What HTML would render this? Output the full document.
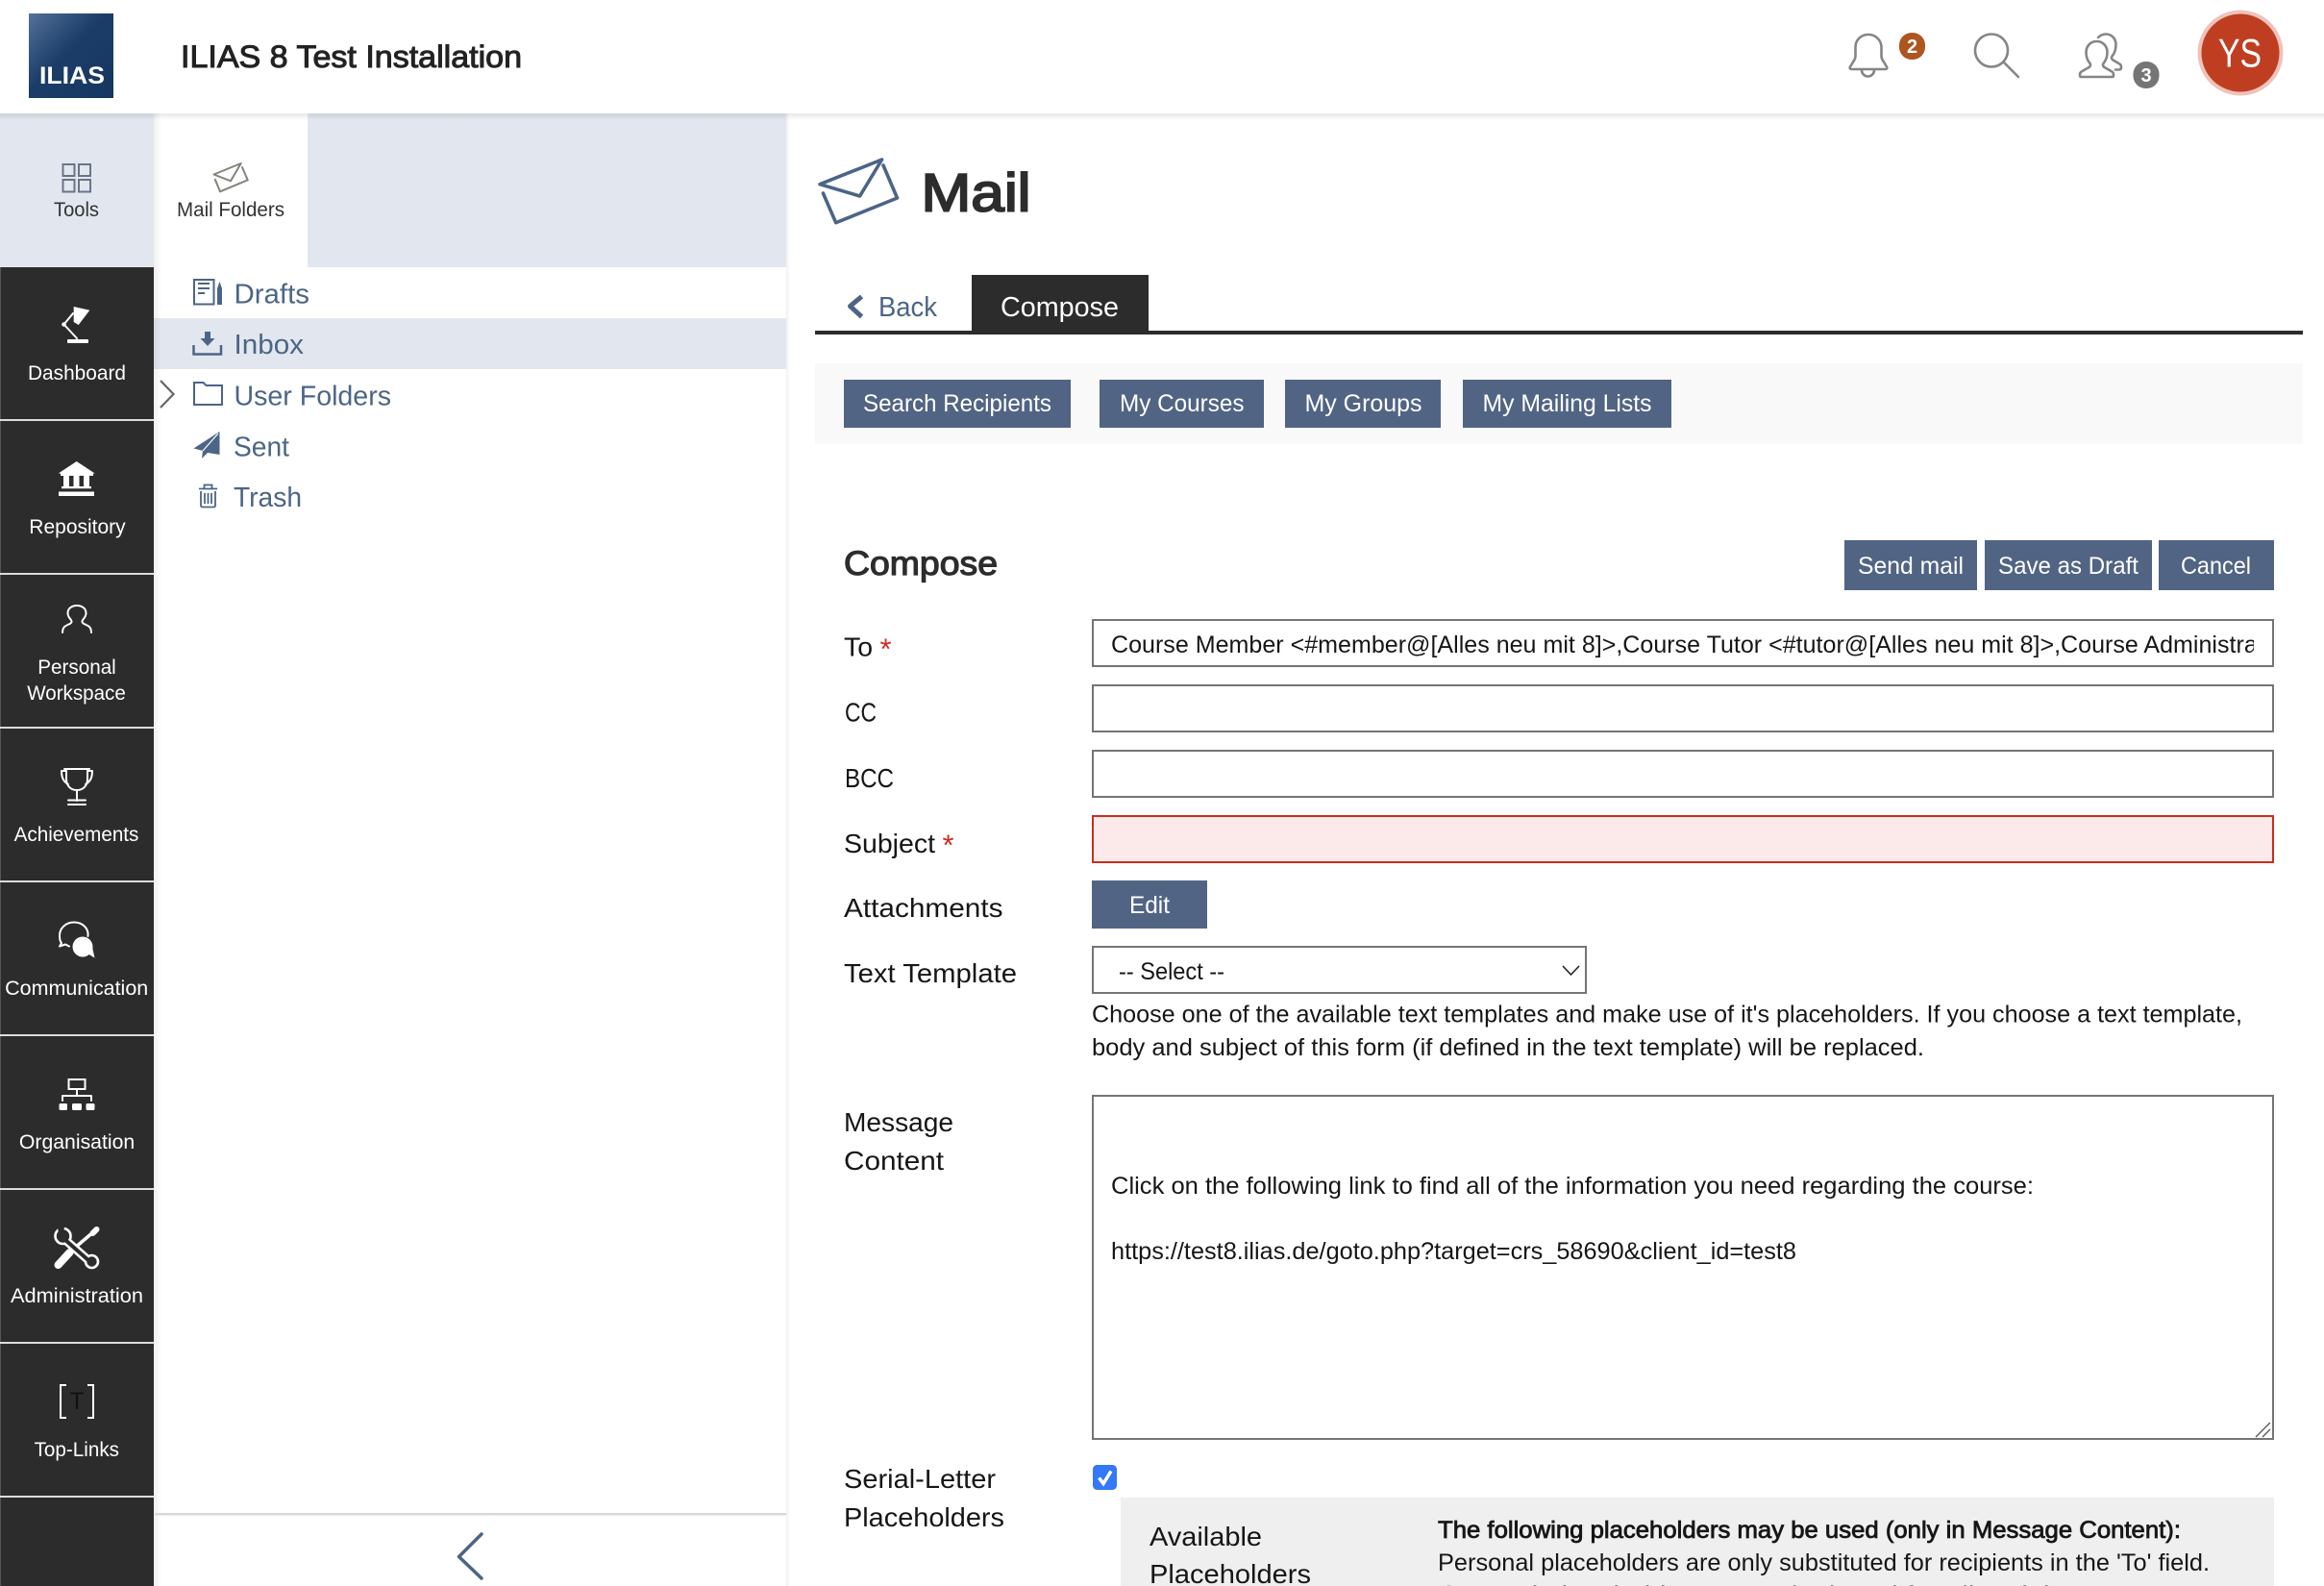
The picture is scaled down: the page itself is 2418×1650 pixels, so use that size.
<!DOCTYPE html>
<html lang="en">
<head>
<meta charset="utf-8">
<title>ILIAS 8 Test Installation - Mail</title>
<style>
html,body{margin:0;padding:0;background:#fff;width:2418px;height:1650px;overflow:hidden}
svg{display:block;position:absolute;left:0;top:0}
text{font-family:"Liberation Sans",Arial,sans-serif;white-space:pre}
.tile{fill:#fff;font-size:21px}
.tree{fill:#4c6586;font-size:29px}
.btn{fill:#fff;font-size:25px}
.lab{fill:#161616;font-size:28px}
.body{fill:#161616;font-size:25px}
.blue{fill:#516484}
.ico{fill:none;stroke:#fff;stroke-width:2;stroke-linecap:round;stroke-linejoin:round}
.hdr{fill:none;stroke:#858585;stroke-width:2.6;stroke-linecap:round;stroke-linejoin:round}
</style>
</head>
<body>
<svg width="2418" height="1650" viewBox="0 0 2418 1650" xmlns="http://www.w3.org/2000/svg">
<defs>
<linearGradient id="logo" x1="0" y1="0" x2="1" y2="1"><stop offset="0" stop-color="#54719a"/><stop offset=".45" stop-color="#1b3d68"/><stop offset="1" stop-color="#153660"/></linearGradient>
<linearGradient id="sh" x1="0" y1="0" x2="1" y2="0"><stop offset="0" stop-color="#000" stop-opacity=".06"/><stop offset="1" stop-color="#000" stop-opacity="0"/></linearGradient>
<linearGradient id="shd" x1="0" y1="0" x2="0" y2="1"><stop offset="0" stop-color="#000" stop-opacity=".09"/><stop offset="1" stop-color="#000" stop-opacity="0"/></linearGradient>
<clipPath id="toclip"><rect x="1140" y="646" width="1205" height="46"/></clipPath>
</defs>

<!-- Slate top row -->
<rect x="0" y="118" width="160" height="160" fill="#e2e7ef"/>
<rect x="320" y="118" width="498" height="160" fill="#e2e7ef"/>
<rect x="160" y="331" width="658" height="53" fill="#e2e7ef"/>

<!-- Dark main bar -->
<rect x="0" y="278" width="160" height="1372" fill="#2c2c2c"/>
<rect x="0" y="278" width="1" height="1372" fill="#555"/>
<g fill="#dcdcdc">
<rect x="0" y="436" width="160" height="2"/><rect x="0" y="596" width="160" height="2"/>
<rect x="0" y="756" width="160" height="2"/><rect x="0" y="916" width="160" height="2"/>
<rect x="0" y="1076" width="160" height="2"/><rect x="0" y="1236" width="160" height="2"/>
<rect x="0" y="1396" width="160" height="2"/><rect x="0" y="1556" width="160" height="2"/>
</g>
<rect x="160" y="118" width="8" height="1532" fill="url(#sh)"/>
<rect x="818" y="118" width="4" height="1532" fill="url(#sh)"/>
<rect x="161" y="1574" width="657" height="2.5" fill="#d8d8d8"/>

<!-- Header -->
<rect x="0" y="0" width="2418" height="118" fill="#fff"/>
<rect x="0" y="118" width="2418" height="7" fill="url(#shd)"/>
<rect x="30" y="14" width="88" height="88" fill="url(#logo)"/>
<text x="41" y="87" font-size="25" font-weight="bold" fill="#fff" textLength="68" lengthAdjust="spacingAndGlyphs">ILIAS</text>
<text x="188" y="70" font-size="32" fill="#222" stroke="#222" stroke-width="1" textLength="355" lengthAdjust="spacingAndGlyphs">ILIAS 8 Test Installation</text>

<!-- Bell -->
<path class="hdr" d="M1943.5 36c-7 0-13 5.5-13 13v9c0 3-1 4.500-2.500 6.500l-3 5c-.8 1.500 0 2.500 1.500 2.500h35c1.500 0 2.300-1 1.500-2.500l-3-5c-1.500-2-2.500-3.500-2.500-6.500v-9c0-7-6-13-13-13z"/>
<path class="hdr" d="M1937 73a6.500 6.500 0 0 0 13 0"/>
<rect x="1976" y="34" width="27" height="28" rx="13" fill="#ae5520"/>
<text x="1989.500" y="55" font-size="20" font-weight="bold" fill="#fff" text-anchor="middle">2</text>
<!-- Search -->
<circle class="hdr" cx="2072" cy="52.500" r="17"/>
<path class="hdr" d="M2085 65l15 15"/>
<!-- People -->
<path class="hdr" d="M2181.500 43c-6.500 0-11 5-11 11.500 0 5 1.500 8.500 4 11.500 1 1.500.5 3-1 4l-7 4c-2 1-2.500 2-2.500 3.500v1c0 1 .5 1.500 1.500 1.500h32c1 0 1.500-.5 1.500-1.500v-1c0-1.500-.5-2.500-2.500-3.500l-7-4c-1.500-1-2-2.500-1-4 2.500-3 4-6.500 4-11.500 0-6.500-4.500-11.500-11-11.500z"/>
<path class="hdr" d="M2183 39c2-2 5-3.500 8-3.500 6 0 10.500 4.500 10.500 11 0 5-1.500 9-4 12-1 1.500-.5 3 1 4l6 3.500c2 1 2.500 2 2.500 3.500v1c0 1.500-1 2-2 2h-4"/>
<rect x="2219.500" y="64" width="27" height="28" rx="13" fill="#757575"/>
<text x="2233" y="85" font-size="20" font-weight="bold" fill="#fff" text-anchor="middle">3</text>
<!-- Avatar -->
<circle cx="2331" cy="55" r="44.500" fill="#eec3ba"/>
<circle cx="2331" cy="55" r="40.500" fill="#bf3e22"/>
<text x="2308" y="69.500" font-size="42" fill="#fff" textLength="45" lengthAdjust="spacingAndGlyphs">YS</text>

<!-- Tools tile -->
<g fill="none" stroke="#6b7487" stroke-width="2">
<rect x="65.500" y="171" width="12" height="12"/><rect x="82" y="171" width="12" height="12"/>
<rect x="65.500" y="187" width="12" height="12.500"/><rect x="82" y="187" width="12" height="12.500"/>
</g>
<text x="56" y="225" font-size="21" fill="#333" textLength="47" lengthAdjust="spacingAndGlyphs">Tools</text>

<!-- Mail Folders tile -->
<g fill="none" stroke="#85837a" stroke-width="2" stroke-linejoin="round">
<path d="M222.500 181.500L250.700 170 240 188.300z"/>
<path d="M223.500 186L229 199.300 257.700 187.300 251.700 173.300"/>
</g>
<text x="184" y="225" font-size="21" fill="#333" textLength="112" lengthAdjust="spacingAndGlyphs">Mail Folders</text>

<!-- Dashboard -->
<path fill="#fff" d="M76.700 319l16.600 3.700-11.600 15.300-5-3z"/>
<path class="ico" stroke-width="2.200" d="M76 326L66.500 337.500 80 352"/>
<circle cx="66.500" cy="337.500" r="2.300" fill="#fff"/>
<rect x="70" y="353" width="22" height="4" rx="1" fill="#fff"/>
<text class="tile" x="29" y="395" textLength="102" lengthAdjust="spacingAndGlyphs">Dashboard</text>

<!-- Repository -->
<path fill="#fff" d="M60.700 492.500L79.700 480 98.700 492.500zM63 492h34v3H63z"/>
<path fill="#fff" d="M66 494h6v13h-6zM76.500 494h6v13h-6zM87 494h6v13h-6zM64 506h31v2.200H64zM61 511.500h37v4.500H61z"/>
<text class="tile" x="30.300" y="555" textLength="100.400" lengthAdjust="spacingAndGlyphs">Repository</text>

<!-- Personal Workspace -->
<path class="ico" d="M65 658c0-4 2-6.500 4.500-7.500l3.500-1.700c1.700-1 2-2.300.8-4-2-2.300-3.300-4-3.300-6.800 0-5 4-8 9.500-8s9.500 3 9.500 8c0 2.800-1.300 4.500-3.300 6.800-1.200 1.700-.9 3 .8 4l3.500 1.700c2.500 1 4.500 3.500 4.500 7.500"/>
<text class="tile" x="39.200" y="701" textLength="81.600" lengthAdjust="spacingAndGlyphs">Personal</text>
<text class="tile" x="28.200" y="728" textLength="102.600" lengthAdjust="spacingAndGlyphs">Workspace</text>

<!-- Achievements -->
<path class="ico" d="M67 800h26M69 800v10c0 7 4 12 11 12s11-5 11-12v-10M69 802h-5c0 7 2 11 7 14M91 802h5c0 7-2 11-7 14M80 822v11M71 832.500h18M71 837h18"/>
<text class="tile" x="14.600" y="875" textLength="129.800" lengthAdjust="spacingAndGlyphs">Achievements</text>

<!-- Communication -->
<path class="ico" d="M91.500 974C92.500 965 85 959.500 77 959.500 68 959.500 62 966 62 973.500 62 977 63 980 64 981L62 984.500 68 982.500 72 984.500"/>
<circle cx="86" cy="985" r="10.500" fill="#fff"/>
<path fill="#fff" d="M91 992l7.500 4.500-2.500-11z"/>
<text class="tile" x="5.200" y="1035" textLength="149" lengthAdjust="spacingAndGlyphs">Communication</text>

<!-- Organisation -->
<rect x="71.500" y="1123" width="17" height="10" fill="none" stroke="#fff" stroke-width="2"/>
<path class="ico" d="M80 1133v7M65 1145v-5h30v5"/>
<rect x="61.500" y="1148" width="8.500" height="7" rx="1.500" fill="#fff"/>
<rect x="75" y="1148" width="10" height="7" rx="1.500" fill="#fff"/>
<rect x="89.500" y="1148" width="9" height="7" rx="1.500" fill="#fff"/>
<text class="tile" x="19.900" y="1195" textLength="120.300" lengthAdjust="spacingAndGlyphs">Organisation</text>

<!-- Administration -->
<path stroke="#fff" stroke-width="8" stroke-linecap="round" d="M60.500 1316l12-13"/>
<path stroke="#fff" stroke-width="3.500" d="M71 1304l27-23"/>
<path stroke="#fff" stroke-width="6" stroke-linecap="round" d="M96.500 1283l4-4"/>
<path stroke="#fff" stroke-width="9" d="M68 1290l25 22"/>
<circle cx="65.500" cy="1286" r="8" fill="#2c2c2c" stroke="#fff" stroke-width="2.600"/>
<circle cx="95.500" cy="1312.500" r="6.500" fill="#2c2c2c" stroke="#fff" stroke-width="2.600"/>
<path stroke="#2c2c2c" stroke-width="4" d="M68 1290l25 22"/>
<path fill="#2c2c2c" d="M60 1276h7l-1 8-5 1z"/>
<text class="tile" x="11" y="1355" textLength="138" lengthAdjust="spacingAndGlyphs">Administration</text>

<!-- Top-Links -->
<path fill="none" stroke="#fff" stroke-width="2" d="M69 1441h-6v34h6M91 1441h6v34h-6"/>
<text x="80" y="1466" font-size="25" fill="#111" text-anchor="middle">T</text>
<text class="tile" x="35.600" y="1515" textLength="88.400" lengthAdjust="spacingAndGlyphs">Top-Links</text>

<!-- Tree -->
<g fill="none" stroke="#4c6586" stroke-width="2">
<rect x="202" y="291" width="20.500" height="25.500"/>
<path d="M206 295h12M206 300h12M206 305h7"/>
</g>
<path fill="#4c6586" d="M226 300l2.500-7 2.500 7v17h-5z"/>
<text class="tree" x="243.500" y="315.700" textLength="78.500" lengthAdjust="spacingAndGlyphs">Drafts</text>

<path fill="none" stroke="#4c6586" stroke-width="2.500" d="M201.500 359v9.500h28.500V359"/>
<path fill="#4c6586" d="M213 345h6v7h4.500L216 360l-7.500-8h4.500z"/>
<text class="tree" x="243.500" y="368" textLength="72.500" lengthAdjust="spacingAndGlyphs">Inbox</text>

<path fill="none" stroke="#666" stroke-width="2.200" d="M167 396l13.500 14L167 424"/>
<path fill="none" stroke="#4c6586" stroke-width="2" d="M202 398h9.500l3 3H231v20h-29z"/>
<text class="tree" x="243.500" y="421.700" textLength="163.500" lengthAdjust="spacingAndGlyphs">User Folders</text>

<path fill="#4c6586" d="M228.500 449l-27 17.500 9.500 2.500-1 8 6-6 12.500 2z"/>
<path stroke="#fff" stroke-width="1.200" d="M227 451l-16 18"/>
<text class="tree" x="243" y="474.300" textLength="58" lengthAdjust="spacingAndGlyphs">Sent</text>

<g fill="none" stroke="#4c6586" stroke-width="1.800">
<path d="M207 508.500h19M212.500 508v-3.500h8v3.500M209 511v15a1.500 1.500 0 0 0 1.500 1.500h12a1.500 1.500 0 0 0 1.500-1.500v-15"/>
<path d="M213 513v11M216.500 513v11M220 513v11"/>
</g>
<text class="tree" x="243" y="527" textLength="71" lengthAdjust="spacingAndGlyphs">Trash</text>

<path fill="none" stroke="#4c6586" stroke-width="3.500" stroke-linecap="round" stroke-linejoin="round" d="M501 1596l-23.500 23.500L501 1642"/>

<!-- Page title -->
<g fill="none" stroke="#4c6586" stroke-width="3.600" stroke-linejoin="round" stroke-linecap="round">
<path d="M853 191.700L917.600 166 894.600 204z"/>
<path d="M856.400 201L869.700 231.700 933.500 206 919 172"/>
</g>
<text x="958.500" y="219.300" font-size="56" fill="#2c2c2c" stroke="#2c2c2c" stroke-width="2" textLength="114" lengthAdjust="spacingAndGlyphs">Mail</text>

<!-- Tabs -->
<path fill="none" stroke="#4c6586" stroke-width="5" stroke-linejoin="round" d="M896.500 308.500L884.500 318.500 896.500 329.500"/>
<text x="914" y="329" font-size="29" fill="#4c6586" textLength="61" lengthAdjust="spacingAndGlyphs">Back</text>
<rect x="1011" y="286" width="184" height="60" fill="#2c2c2c"/>
<rect x="848" y="344" width="1548" height="4" fill="#2c2c2c"/>
<text x="1041" y="329" font-size="29" fill="#fff" textLength="123" lengthAdjust="spacingAndGlyphs">Compose</text>

<!-- Toolbar -->
<rect x="848" y="378" width="1548" height="84" fill="#f9f9f9"/>
<rect class="blue" x="878" y="395" width="236" height="50"/>
<rect class="blue" x="1144" y="395" width="171" height="50"/>
<rect class="blue" x="1337" y="395" width="162" height="50"/>
<rect class="blue" x="1522" y="395" width="217" height="50"/>
<text class="btn" x="898" y="428" textLength="196" lengthAdjust="spacingAndGlyphs">Search Recipients</text>
<text class="btn" x="1165" y="428" textLength="129.500" lengthAdjust="spacingAndGlyphs">My Courses</text>
<text class="btn" x="1357.500" y="428" textLength="122" lengthAdjust="spacingAndGlyphs">My Groups</text>
<text class="btn" x="1542.500" y="428" textLength="176" lengthAdjust="spacingAndGlyphs">My Mailing Lists</text>

<!-- Form header -->
<text x="878" y="598" font-size="35" fill="#2c2c2c" stroke="#2c2c2c" stroke-width="1.200" textLength="160" lengthAdjust="spacingAndGlyphs">Compose</text>
<rect class="blue" x="1919" y="562" width="138" height="52"/>
<rect class="blue" x="2065" y="562" width="174" height="52"/>
<rect class="blue" x="2246" y="562" width="120" height="52"/>
<text class="btn" x="1933" y="597" textLength="110" lengthAdjust="spacingAndGlyphs">Send mail</text>
<text class="btn" x="2079" y="597" textLength="146" lengthAdjust="spacingAndGlyphs">Save as Draft</text>
<text class="btn" x="2269" y="597" textLength="73" lengthAdjust="spacingAndGlyphs">Cancel</text>

<!-- Labels -->
<text class="lab" x="878" y="682.500" textLength="30" lengthAdjust="spacingAndGlyphs">To</text>
<text x="915.500" y="685.300" font-size="31" fill="#cb2d1f">*</text>
<text class="lab" x="879" y="750.700" textLength="33" lengthAdjust="spacingAndGlyphs">CC</text>
<text class="lab" x="879" y="819" textLength="51" lengthAdjust="spacingAndGlyphs">BCC</text>
<text class="lab" x="878" y="887" textLength="95" lengthAdjust="spacingAndGlyphs">Subject</text>
<text x="980.500" y="889.500" font-size="31" fill="#cb2d1f">*</text>
<text class="lab" x="878" y="954" textLength="165.500" lengthAdjust="spacingAndGlyphs">Attachments</text>
<text class="lab" x="878" y="1022" textLength="180" lengthAdjust="spacingAndGlyphs">Text Template</text>
<text class="lab" x="878" y="1177" textLength="114" lengthAdjust="spacingAndGlyphs">Message</text>
<text class="lab" x="878" y="1217" textLength="104" lengthAdjust="spacingAndGlyphs">Content</text>
<text class="lab" x="878" y="1548" textLength="158" lengthAdjust="spacingAndGlyphs">Serial-Letter</text>
<text class="lab" x="878" y="1588" textLength="167" lengthAdjust="spacingAndGlyphs">Placeholders</text>

<!-- Inputs -->
<g fill="#fff" stroke="#757575" stroke-width="2">
<rect x="1137" y="645" width="1228" height="48"/>
<rect x="1137" y="713" width="1228" height="48"/>
<rect x="1137" y="781" width="1228" height="48"/>
<rect x="1137" y="985" width="513" height="48"/>
<rect x="1137" y="1140" width="1228" height="357"/>
</g>
<rect x="1137" y="849" width="1228" height="48" fill="#fceaea" stroke="#cb2d1f" stroke-width="2"/>
<g clip-path="url(#toclip)">
<text class="body" x="1156" y="679" textLength="1222" lengthAdjust="spacingAndGlyphs">Course Member &lt;#member@[Alles neu mit 8]&gt;,Course Tutor &lt;#tutor@[Alles neu mit 8]&gt;,Course Administrator</text>
</g>

<rect class="blue" x="1136" y="916" width="120" height="50"/>
<text class="btn" x="1175" y="950" textLength="42" lengthAdjust="spacingAndGlyphs">Edit</text>

<text class="body" x="1164" y="1019" textLength="110" lengthAdjust="spacingAndGlyphs">-- Select --</text>
<path fill="none" stroke="#222" stroke-width="1.600" d="M1626 1005l8.500 9 8.500-9"/>
<text class="body" x="1136" y="1063.500" textLength="1197" lengthAdjust="spacingAndGlyphs">Choose one of the available text templates and make use of it's placeholders. If you choose a text template,</text>
<text class="body" x="1136" y="1098" textLength="866" lengthAdjust="spacingAndGlyphs">body and subject of this form (if defined in the text template) will be replaced.</text>

<text class="body" x="1156" y="1242" textLength="960" lengthAdjust="spacingAndGlyphs">Click on the following link to find all of the information you need regarding the course:</text>
<text class="body" x="1156" y="1310" textLength="713" lengthAdjust="spacingAndGlyphs">https://test8.ilias.de/goto.php?target=crs_58690&amp;client_id=test8</text>
<path stroke="#555" stroke-width="1.300" d="M2347 1495l15-15M2354 1495l8-8"/>

<!-- Checkbox -->
<rect x="1137" y="1524" width="25" height="26" rx="4.500" fill="#3478f6"/>
<path fill="none" stroke="#fff" stroke-width="3.500" d="M1143.500 1537.500l4.500 6 8-13"/>

<!-- Placeholder panel -->
<rect x="1166" y="1558" width="1200" height="92" fill="#efefef"/>
<text class="lab" x="1196" y="1608" textLength="117" lengthAdjust="spacingAndGlyphs">Available</text>
<text class="lab" x="1196" y="1647" textLength="168" lengthAdjust="spacingAndGlyphs">Placeholders</text>
<text class="body" stroke="#161616" stroke-width=".8" x="1496" y="1600" textLength="773" lengthAdjust="spacingAndGlyphs">The following placeholders may be used (only in Message Content):</text>
<text class="body" x="1496" y="1634" textLength="803" lengthAdjust="spacingAndGlyphs">Personal placeholders are only substituted for recipients in the 'To' field.</text>
<text class="body" x="1496" y="1667.500" textLength="700" lengthAdjust="spacingAndGlyphs">General placeholders are substituted for all recipients.</text>
</svg>
</body>
</html>
